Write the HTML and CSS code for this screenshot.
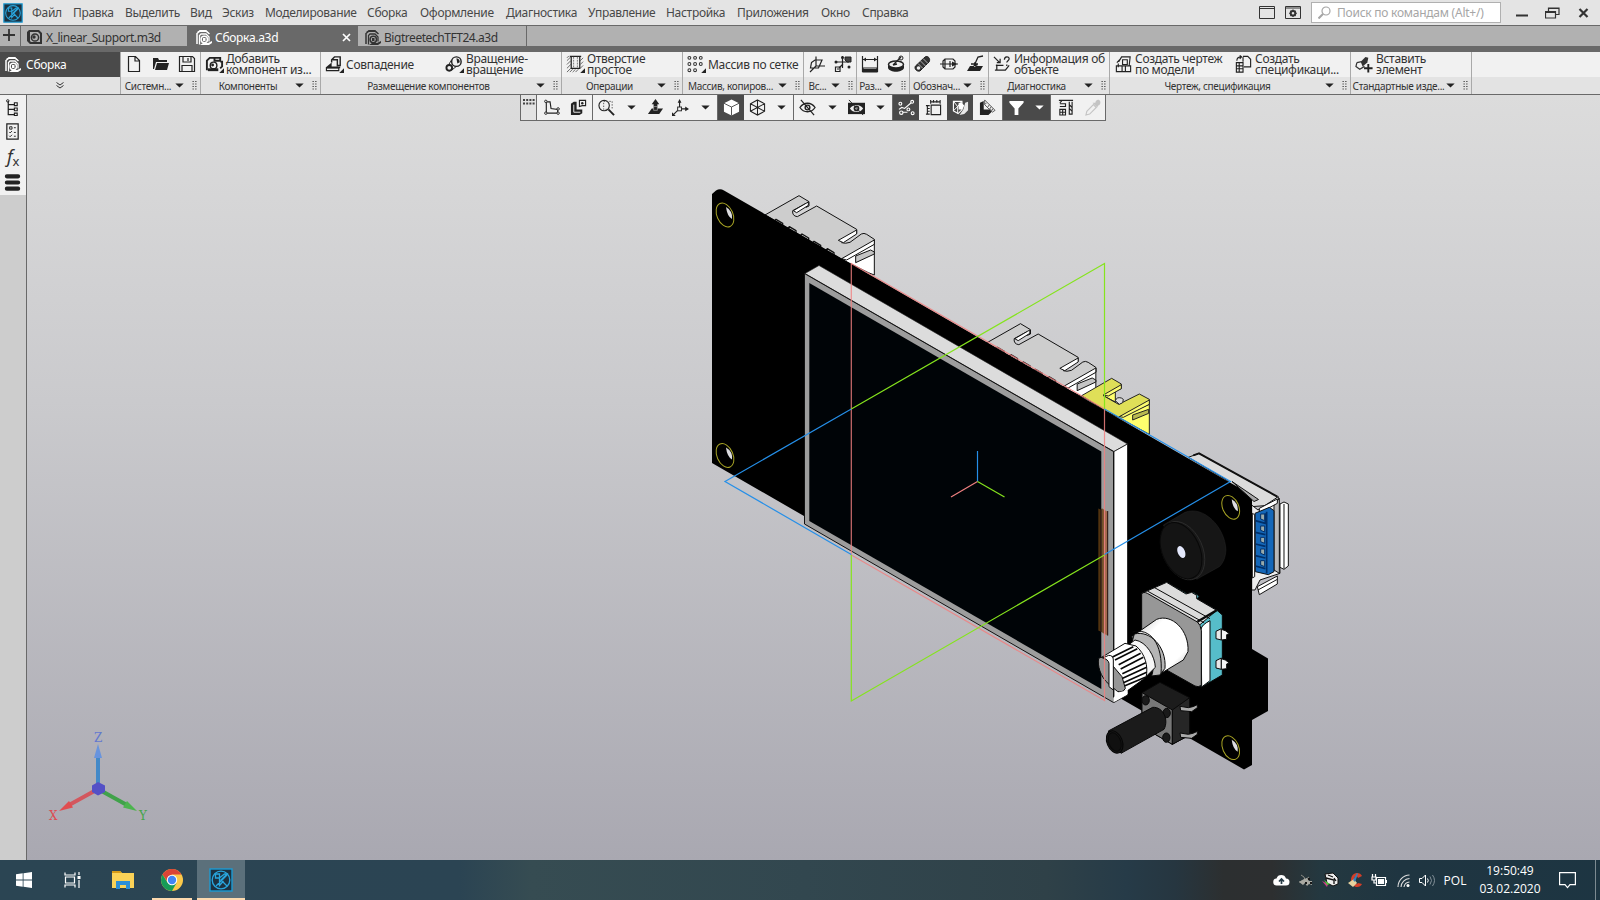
FILE: index.html
```html
<!DOCTYPE html>
<html lang="ru">
<head>
<meta charset="utf-8">
<title>Сборка.a3d</title>
<link rel="stylesheet" href="styles.css">
</head>
<body>
<svg class="defs" width="0" height="0">
  <defs>
    <symbol id="logo" viewBox="0 0 24 24"><rect x="1" y="1" width="22" height="22" fill="#1c3140" stroke="#1b9bd3" stroke-width="1.400"/><g fill="none" stroke="#29a5dd" stroke-width="1.300"><circle cx="12" cy="12" r="8.800"/><path d="M6.500 6h4v4l5-4h2.500l-6 6 6 6M6.500 6v4l4 0M10.500 9.500v8l4-4.500M7 18l11-11"/></g></symbol>
    <symbol id="asm" viewBox="0 0 18 18"><path d="M2 16V5.500L5 3h6l3.500 3" fill="none" stroke="currentColor" stroke-width="1.500"/><path d="M4.500 16.500V7.500L6 6h5l3 3v4.500" fill="none" stroke="currentColor" stroke-width="1.300"/><path d="M5 17l3-2h5l4-2v2l-3 2z" fill="currentColor"/><circle cx="9.300" cy="11.500" r="3.200" fill="none" stroke="currentColor" stroke-width="1.500"/><path d="M8 10h2.500v3H8zM2 4l3-2h6l3 3-3-1H5z" fill="currentColor"/></symbol>
    <symbol id="part" viewBox="0 0 18 18"><path d="M1 4l2-2h10l3 3v11H4l-3-3zm3 0v9l1 1h9V6l-2-2z" fill="currentColor" fill-rule="evenodd"/><circle cx="9" cy="9.500" r="3.600" fill="none" stroke="currentColor" stroke-width="1.500"/><circle cx="8" cy="9" r="1.700" fill="currentColor"/></symbol>
    <symbol id="down" viewBox="0 0 10 6"><path d="M0 .5h10L5 5.500z" fill="currentColor"/></symbol>
    <symbol id="grip" viewBox="0 0 5 9"><path d="M.5.5h1.300M3.200.5h1.300M.5 3h1.300M3.200 3h1.300M.5 5.500h1.300M3.200 5.500h1.300M.5 8h1.300M3.200 8h1.300" stroke="#444" stroke-width="1.200"/></symbol>
  </defs>
</svg>
<div class="app">
  <header class="menu">
    <svg class="logo"><use href="#logo"/></svg>
    <span>Файл</span><span>Правка</span><span>Выделить</span><span>Вид</span><span>Эскиз</span><span>Моделирование</span><span>Сборка</span><span>Оформление</span><span>Диагностика</span><span>Управление</span><span>Настройка</span><span>Приложения</span><span>Окно</span><span>Справка</span>
    <svg width="16" height="13" viewBox="0 0 16 13"><path d="M.5.5h15v12H.5zM.5 2.500h15" fill="none" stroke="#333"/></svg>
    <svg width="16" height="13" viewBox="0 0 16 13"><path d="M.5.5h15v12H.5zM.5 2h15" fill="none" stroke="#333"/><circle cx="8" cy="7.300" r="2.300" fill="none" stroke="#333" stroke-width="2"/><path d="M8 3.500v1.500M8 9.500v1.500M4.300 7.300h1.500M10.200 7.300h1.500M5.500 4.700l1 1M9.500 9l1 1M10.500 4.700l-1 1M6.500 9l-1 1" stroke="#333" stroke-width="1.300"/></svg>
    <div class="search"><svg width="13" height="13" viewBox="0 0 13 13"><circle cx="8" cy="5" r="4" fill="none" stroke="#a5a5a5" stroke-width="1.200"/><path d="M5 8l-4.500 4.500" stroke="#a5a5a5" stroke-width="2"/></svg>Поиск по командам (Alt+/)</div>
    <svg width="13" height="14" viewBox="0 0 13 14"><path d="M0 9.500h12" stroke="#333" stroke-width="2"/></svg>
    <svg width="15" height="12" viewBox="0 0 15 12"><path d="M.5 4.500h10v6.500H.5zM.5 5.500h10M3.500 4V1h10.500v6.500h-3M3.500 1.500H14" fill="none" stroke="#333" stroke-width="1.200"/></svg>
    <svg width="11" height="10" viewBox="0 0 11 10"><path d="M1.500 1l8 8M9.500 1l-8 8" stroke="#333" stroke-width="2.200"/></svg>
  </header>

  <nav class="tabs">
    <div class="plus"><svg width="12" height="12" viewBox="0 0 12 12"><path d="M6 0v12M0 6h12" stroke="#333" stroke-width="1.800"/></svg></div>
    <div class="tab"><svg class="i18"><use href="#part"/></svg><span>X_linear_Support.m3d</span></div>
    <div class="tab active"><svg class="i18"><use href="#asm"/></svg><span>Сборка.a3d</span><svg class="close" width="9" height="9" viewBox="0 0 9 9"><path d="M1 1l7 7M8 1l-7 7" stroke="#fff" stroke-width="1.700"/></svg></div>
    <div class="tab"><svg class="i18"><use href="#asm"/></svg><span>BigtreetechTFT24.a3d</span></div>
    <div class="tabrest"></div>
  </nav>

  <section class="ribbon">
    <div class="mode"><div class="modename"><svg class="i18"><use href="#asm"/></svg>Сборка</div><div class="chev"><svg width="8" height="7" viewBox="0 0 8 7"><path d="M.5.5L4 3l3.500-2.500M.5 3.500L4 6l3.500-2.500" fill="none" stroke="#333"/></svg></div></div>

    <div class="grp sys"><div class="tools">
      <svg viewBox="0 0 18 18"><path d="M2.500 1.500h7l4 4v11h-11zM9 1.500V6h4.500" fill="none" stroke="#222" stroke-width="1.200"/></svg>
      <svg viewBox="0 0 18 18"><path d="M1 3h5l1 2h8v2H4l-2 7H1z M5 8h12l-2 7H3z" fill="#222"/></svg>
      <svg viewBox="0 0 18 18"><path d="M1.500 1.500h13l2 2v13h-15zM5 1.500V7h8V1.500M4 16.500v-6h10v6M10 3v3" fill="none" stroke="#222" stroke-width="1.200"/></svg>
    </div><div class="cap"><b>Системн...</b><svg class="dn"><use href="#down"/></svg><svg class="gr"><use href="#grip"/></svg></div></div>

    <div class="grp"><div class="tools">
      <div class="cmd"><svg viewBox="0 0 20 20"><path d="M2 16V6l3-3h4M10 3h6v3h-6zM16 7h2v5l-2 2" fill="none" stroke="#222" stroke-width="2"/><path d="M3 17h11v-3H3z" fill="#222"/><circle cx="9" cy="11" r="3.500" fill="none" stroke="#222" stroke-width="1.500"/><circle cx="8" cy="10.500" r="1.500" fill="#222"/><path d="M20 14v5h-5z" fill="#222"/></svg><span>Добавить<br>компонент из...</span></div>
    </div><div class="cap"><b>Компоненты</b><svg class="dn"><use href="#down"/></svg><svg class="gr"><use href="#grip"/></svg></div></div>

    <div class="grp"><div class="tools">
      <div class="cmd w120"><svg viewBox="0 0 20 20"><path d="M7 8V5l3-3h6v9h-3M8 5h5v7" fill="none" stroke="#222" stroke-width="1.500"/><path d="M1 13l6-5v4h9v2H1z" fill="#222"/><path d="M1.500 13.500h13v3h-13z" fill="none" stroke="#222" stroke-width="1.200"/><path d="M20 14v5h-5z" fill="#222"/></svg><span>Совпадение</span></div>
      <div class="cmd"><svg viewBox="0 0 20 20"><circle cx="12" cy="7" r="5" fill="none" stroke="#222" stroke-width="1.500"/><path d="M12 3.500c2.500.5 3.500 2 3.500 4L13 9z" fill="#222"/><circle cx="4.500" cy="13.500" r="3" fill="none" stroke="#222" stroke-width="2"/><path d="M4 10l3-5M7 16l5-4" stroke="#222"/><path d="M20 14v5h-5z" fill="#222"/></svg><span>Вращение-<br>вращение</span></div>
    </div><div class="cap"><b>Размещение компонентов</b><svg class="dn"><use href="#down"/></svg><svg class="gr"><use href="#grip"/></svg></div></div>

    <div class="grp"><div class="tools">
      <div class="cmd"><svg viewBox="0 0 20 20"><path d="M1 6l4-4M1 10l4-4M1 14l4-4M1 18l4-4M4 18l3-3M7 18l3-3M10 18l3-3M15 6l3-3M15 10l3-3M15 14l3-3M1 3l2-2" stroke="#555" stroke-width=".9"/><path d="M5.500 1.500h9V14h-9zM4 1.500h12" fill="#f1f1f1" stroke="#222" stroke-width="1.300"/><path d="M8 2v11M12 2v11" stroke="#777" stroke-dasharray="2 1"/><path d="M20 14v5h-5z" fill="#222"/></svg><span>Отверстие<br>простое</span></div>
    </div><div class="cap"><b>Операции</b><svg class="dn"><use href="#down"/></svg><svg class="gr"><use href="#grip"/></svg></div></div>

    <div class="grp"><div class="tools">
      <div class="cmd"><svg viewBox="0 0 20 20"><g fill="none" stroke="#333" stroke-width="1.100"><circle cx="2.500" cy="3" r="1.500"/><circle cx="8.500" cy="3" r="1.500"/><circle cx="14.500" cy="3" r="1.500"/><circle cx="2.500" cy="9.500" r="1.500"/><circle cx="8.500" cy="9.500" r="1.500"/><circle cx="14.500" cy="9.500" r="1.500"/><circle cx="2.500" cy="16" r="1.500"/><circle cx="8.500" cy="16" r="1.500"/></g><path d="M20 14v5h-5z" fill="#222"/></svg><span>Массив по сетке</span></div>
    </div><div class="cap"><b>Массив, копиров...</b><svg class="dn"><use href="#down"/></svg><svg class="gr"><use href="#grip"/></svg></div></div>

    <div class="grp duo"><div class="tools">
      <svg viewBox="0 0 18 18"><path d="M8 1.500V11l-6 6M8 11h9M3.500 7.500L7 5h7l-3.500 8H2.500z" fill="none" stroke="#222" stroke-width="1.200"/></svg>
      <svg viewBox="0 0 18 18"><path d="M8.500 1v12M2 7h13M5 13l4-4" stroke="#222" stroke-width="1.200"/><path d="M11 2h6v5h-4l-2-2z" fill="#444" stroke="#222"/><path d="M1.500 12h4.500v4.500H1.500zM3 14h2" fill="none" stroke="#222" stroke-width="1.200"/><circle cx="8.500" cy="2.500" r="1.500" fill="#222"/><circle cx="2" cy="7" r="1.500" fill="#222"/><circle cx="15" cy="12" r="1.500" fill="#222"/></svg>
    </div><div class="cap"><b>Вс...</b><svg class="dn"><use href="#down"/></svg><svg class="gr"><use href="#grip"/></svg></div></div>

    <div class="grp duo"><div class="tools">
      <svg viewBox="0 0 18 18"><path d="M1.500 1v16M16.500 1v16M2 4.500h14M2 13h14v4H2z" stroke="#222" fill="none" stroke-width="1.200"/><path d="M2 14h14v3H2zM2 4.500l3-2v4zM16 4.500l-3-2v4z" fill="#222"/></svg>
      <svg viewBox="0 0 18 18"><ellipse cx="9" cy="9.500" rx="7.500" ry="3.500" fill="none" stroke="#222" stroke-width="1.500"/><path d="M1 10v3c2 5 14 5 16 0v-3c-2 4-14 4-16 0z" fill="#222"/><path d="M6 10l8-8M6 10l4-1" stroke="#222" stroke-width="1.300"/><circle cx="14" cy="3" r="2" fill="none" stroke="#222"/></svg>
    </div><div class="cap"><b>Раз...</b><svg class="dn"><use href="#down"/></svg><svg class="gr"><use href="#grip"/></svg></div></div>

    <div class="grp duo"><div class="tools">
      <svg viewBox="0 0 18 18"><path d="M1.500 11L11 2c3-2 6 2 4 5l-9 9c-4 1-6-3-4.500-5z" fill="#333" stroke="#222"/><path d="M4 8.500l5 5M6.500 6l5 5M9 3.500l5 5" stroke="#ccc" stroke-width=".8"/><circle cx="4.500" cy="13" r="1.800" fill="#eee"/></svg>
      <svg viewBox="0 0 18 18"><path d="M5 4h8l2 2v6l-2 2H5l-2-2V6zM0 9h18M5 4v10M10 6v6" fill="none" stroke="#222" stroke-width="1.200"/><path d="M12 6.500L17 9l-5 2.500z" fill="#222"/></svg>
      <svg viewBox="0 0 18 18"><path d="M17 1l-5 1-4 9M5 9h7" fill="none" stroke="#222" stroke-width="1.300"/><path d="M4 11h13l-3 5H1zM8 7l0 5 4-2z" fill="#222"/></svg>
    </div><div class="cap"><b>Обознач...</b><svg class="dn"><use href="#down"/></svg><svg class="gr"><use href="#grip"/></svg></div></div>

    <div class="grp"><div class="tools">
      <div class="cmd"><svg viewBox="0 0 20 20"><path d="M1 2l6 6M4 8h3.500V4M4 10v6h9l4-5M2 16h2M3 11l8 0M12 5c0-4 5-4 5-1 0 2-2.500 2-2.500 4M14.500 10v1.500" fill="none" stroke="#222" stroke-width="1.300"/></svg><span>Информация об<br>объекте</span></div>
    </div><div class="cap"><b>Диагностика</b><svg class="dn"><use href="#down"/></svg><svg class="gr"><use href="#grip"/></svg></div></div>

    <div class="grp"><div class="tools">
      <div class="cmd w120"><svg viewBox="0 0 20 20"><path d="M2.500 17.500h15v-6h-15zM4.500 9v4M8.500 11v6M12 11v6M5 7l3-5h9l-1 9M9 5h5v5H9zM3 8l3-3" fill="none" stroke="#222" stroke-width="1.200"/></svg><span>Создать чертеж<br>по модели</span></div>
      <div class="cmd"><svg viewBox="0 0 20 20"><path d="M9.500 1.500h5l3 3v8h-7M2.500 8h7v10h-7zM2.500 11.500h7M2.500 14.500h7M5.500 8v10M3 6c0-3 2-4 5-4M6 .5L8 2 6 4M9.500 2v5" fill="none" stroke="#222" stroke-width="1.200"/></svg><span>Создать<br>спецификаци...</span></div>
    </div><div class="cap"><b>Чертеж, спецификация</b><svg class="dn"><use href="#down"/></svg><svg class="gr"><use href="#grip"/></svg></div></div>

    <div class="grp"><div class="tools">
      <div class="cmd"><svg viewBox="0 0 20 20"><path d="M6 7l5-5 3 1-1 5-5 4z" fill="#333"/><path d="M2 8l5-1M2 8l-1 4 4 3 5-3" fill="none" stroke="#333" stroke-width="1.300"/><path d="M14 9.500v9M9.500 14h9" fill="none" stroke="#222" stroke-width="2"/></svg><span>Вставить<br>элемент</span></div>
    </div><div class="cap"><b>Стандартные изде...</b><svg class="dn"><use href="#down"/></svg><svg class="gr"><use href="#grip"/></svg></div></div>
    <div class="grp rest"><div class="tools"></div><div class="cap"></div></div>
  </section>

  <main class="work">
    <aside class="side"><div class="sidebox">
      <svg viewBox="0 0 18 18"><path d="M4.500 2v14.500h7M4.500 6h7M4.500 11h7" fill="none" stroke="#222" stroke-width="1.300"/><circle cx="4" cy="2" r="1.300" fill="none" stroke="#222"/><path d="M11 4h3v3h-3zM11 9.500h3v3h-3zM11 15h3v2.500h-3z" fill="none" stroke="#222" stroke-width="1.200"/></svg>
      <svg viewBox="0 0 18 18"><path d="M3 1h12v16H3z" fill="none" stroke="#222" stroke-width="1.300"/><path d="M6 4h2.500v2.500H6zM10.500 5h2M5.500 9.500l1 1 2-2M10.500 10h2M5.500 13.500l1 1 2-2M10.500 14h2" fill="none" stroke="#222"/></svg>
      <div class="fx">f<sub>x</sub></div>
      <svg viewBox="0 0 18 18"><path d="M3 2.500h12M3 9h12M3 15.500h12" stroke="#222" stroke-width="4.300" stroke-linecap="round"/></svg>
    </div></aside>

    <div class="view">
      <div class="vbar">
        <div class="grip"><svg width="12" height="6" viewBox="0 0 12 6"><path d="M0 1h12M0 4.500h12" stroke="#444" stroke-width="2" stroke-dasharray="2 1.200"/></svg></div>
        <div><svg viewBox="0 0 18 18"><path d="M3.500 3v12h12v-4l-7-1-1-7z" fill="none" stroke="#222" stroke-width="1.200"/><g fill="#f1f1f1" stroke="#222"><circle cx="3" cy="2.500" r="1.300"/><circle cx="3" cy="15" r="1.300"/><circle cx="16" cy="15" r="1.300"/><circle cx="16" cy="10.500" r="1.300"/></g></svg></div>
        <div class="end"><svg viewBox="0 0 18 18"><path d="M1 5l3-2h3v8h6v4l-3 2H1z" fill="#222"/><path d="M4 6v8h7" stroke="#eee" fill="none"/><path d="M10 1.500h6.500v5.500H13l-3 1z" fill="none" stroke="#222" stroke-width="1.200"/><circle cx="13" cy="4.500" r="1.300" fill="#222"/></svg></div>
        <div><svg viewBox="0 0 18 18"><circle cx="6.500" cy="7" r="5.500" fill="none" stroke="#222" stroke-width="1.200"/><path d="M11 11l6 6" stroke="#222" stroke-width="2"/><path d="M6 2.500h9v9M6 4v7h8" fill="none" stroke="#555" stroke-dasharray="1.500 1.500"/></svg></div>
        <div><svg class="dn"><use href="#down"/></svg></div>
        <div><svg viewBox="0 0 18 18"><path d="M9 0l4 5.500H11V12H7V5.500H5z" fill="#222"/><path d="M5 10h12l-4 6H1z" fill="#222"/><path d="M7 8h4v4H7z" fill="#222" stroke="#f1f1f1" stroke-width=".5"/></svg></div>
        <div><svg viewBox="0 0 18 18"><path d="M8 2v8M10 10.500h6M6 12l-5 5" stroke="#222" stroke-width="1.200"/><path d="M6 4l2-4 2 4zM14 8l4 2.500-4 2.500zM0 14l0 4 4 0z" fill="#222"/><rect x="6" y="8.500" width="4" height="4" fill="#f1f1f1" stroke="#222"/></svg></div>
        <div class="end2"><svg class="dn"><use href="#down"/></svg></div>
        <div class="on"><svg viewBox="0 0 18 18"><path d="M9 .5l8 4v9l-8 4-8-4v-9z" fill="#fff"/><path d="M1 4.500l8 4 8-4M9 8.500v9" fill="none" stroke="#4a4a4a"/></svg></div>
        <div><svg viewBox="0 0 18 18"><path d="M9 1l7.500 4v8L9 17l-7.500-4V5zM1.500 5L9 9l7.500-4M9 9v8M9 1v8l-7.500 4M9 9l7.500 4" fill="none" stroke="#222" stroke-width="1.100"/></svg></div>
        <div class="end"><svg class="dn"><use href="#down"/></svg></div>
        <div><svg viewBox="0 0 18 18"><path d="M1 9c4-6 12-6 16 0-4 6-12 6-16 0z" fill="none" stroke="#222" stroke-width="1.400"/><circle cx="9" cy="9" r="2.500" fill="none" stroke="#222" stroke-width="1.500"/><path d="M2 1l14 16" stroke="#222" stroke-width="1.300"/></svg></div>
        <div><svg class="dn"><use href="#down"/></svg></div>
        <div><svg viewBox="0 0 18 18"><path d="M0 4h18v12H0z" fill="#222"/><path d="M2 10c3-5 11-5 14 0-3 5-11 5-14 0z" fill="#eee"/><circle cx="9" cy="10" r="3" fill="#222"/><circle cx="9" cy="10" r="1.200" fill="#eee"/><path d="M1 1l15 16" stroke="#222"/></svg></div>
        <div class="end2"><svg class="dn"><use href="#down"/></svg></div>
        <div class="on"><svg viewBox="0 0 18 18"><g fill="none" stroke="#fff" stroke-width="1.200"><path d="M1 11L4 9l3 1 7-6M5 14h5"/><circle cx="2.500" cy="5" r="1.500"/><circle cx="15" cy="3" r="1.500"/><circle cx="3.500" cy="14.500" r="1.800"/><circle cx="11" cy="11" r="1.500"/><circle cx="15.500" cy="15" r="1.500"/></g></svg></div>
        <div><svg viewBox="0 0 18 18"><path d="M6.500 6.500h10v10h-10zM6 1v4M16 1v4M6 3h10M1 7h4M1 16h4M2.500 7v9M9 1v3M12.500 1v3M2 10h3M2 13h3" fill="none" stroke="#222" stroke-width="1.200"/></svg></div>
        <div class="on"><svg viewBox="0 0 18 18"><path d="M1.500 2.500h9v9l-4 4-5-3z" fill="none" stroke="#fff" stroke-width="1.200"/><path d="M2 3l4 5 4-5M6 8v7M2 12l8-8" fill="none" stroke="#fff"/><path d="M7 4h3l3 3-2 4H7z" fill="#fff"/><path d="M14 4l3-1v9l-4 4-5 1 4-6z" fill="#e8e8e8"/></svg></div>
        <div class="end2"><svg viewBox="0 0 18 18"><path d="M1 4l4-2v9h8v3l-3 3H1z" fill="#222"/><path d="M6 1l11 11-3 2L6 6zM8 4l-2 2M11 6l-2 3M13 8l-2 3M15 10l-2 3" fill="none" stroke="#555"/></svg></div>
        <div class="on"><svg viewBox="0 0 18 18"><path d="M1.500 2h15v2L11 10v7H7v-7L1.500 4z" fill="#fff"/></svg></div>
        <div class="on end2"><svg class="dn"><use href="#down"/></svg></div>
        <div><svg viewBox="0 0 18 18"><path d="M2 1.500h15M3 5h6v3H3M3 11v6h6v-6zM3 14h6M6 11v6M13 3v13h3V3M13 6l3 3M13 10l3 3M3 4l2-2" fill="none" stroke="#222" stroke-width="1.200"/></svg></div>
        <div><svg viewBox="0 0 18 18"><path d="M2 17l1-4 7-7 3 3-7 7z" fill="none" stroke="#c4c4c4" stroke-width="1.200"/><path d="M9 4l5 5 1-2c3-1 3-5 1-6s-4 1-4 3z" fill="#c4c4c4"/></svg></div>
      </div>

      <svg class="scene" viewBox="27 95 1573 765" width="1573" height="765">
        <defs>
          <linearGradient id="cyl" x1="0" y1="0" x2="1" y2="1"><stop offset="0" stop-color="#bbb"/><stop offset=".3" stop-color="#fff"/><stop offset=".75" stop-color="#fff"/><stop offset="1" stop-color="#aaa"/></linearGradient>
          <g id="conn" stroke="#111" stroke-width="3" stroke-linejoin="round">
            <path d="M425 238L523 180V285L505 278Z" fill="#fff"/>
            <path d="M467 228L512 210L523 216V222L467 248Z" fill="#c4c4c4"/>
            <path d="M195 105L297 47L327 65V78L318 82L318 70L278 92Q276 108 292 110L350 78L470 148V160L425 188Q436 192 450 187L484 162Q492 158 500 163L523 178V192L425 238Z" fill="#cdcdcd"/>
            <path d="M415 181L470 150V162L430 188ZM280 92L318 70L325 66V76L290 98Z" fill="#fff"/>
            <path d="M425 236L523 180V193L440 240Z" fill="#fff"/>
            <path d="M220 125l8-7 20 12v8M260 147l8-7 20 12v8M298 169l8-7 20 12v8M334 191l8-7 20 12v8M374 213l8-7 20 12v8" fill="none" stroke-width="4"/>
          </g>
          <g id="hole"><ellipse rx="8" ry="12.500" transform="rotate(-24)" fill="#000" stroke="#a9a524"/><path d="M1 -8Q8 -4 7 4Q2 1 1 -8Z" fill="#dcdce0"/></g>
        </defs>
        <use href="#conn" transform="translate(700 180) scale(.33333)"/>
        <use href="#conn" transform="translate(921.500 308) scale(.33333)"/>
        <g transform="translate(960 300) scale(.33333)" stroke="#222" stroke-width="3" stroke-linejoin="round">
          <path d="M475 352L568 312V403Z" fill="#ffff6e"/>
          <path d="M430 287L466 270V306Z" fill="#ffff6e"/>
          <path d="M365 287L455 235L484 252V266L430 287L476 313L538 282L568 298V313L475 352L440 335Z" fill="#dfdf58"/>
          <path d="M430 285L484 254V266L445 288ZM478 350L568 300V313L490 352Z" fill="#fbfb70"/>
          <path d="M518 345L566 328V340L518 360Z" fill="#b9b950"/><path d="M466 302q4-12 18-8l6 4-2 10-10 5z" fill="#ddd"/>
        </g>
        <g transform="translate(1060 430) scale(.33333)" stroke="#111" stroke-width="3" stroke-linejoin="round">
          <path d="M385 82L417 70L652 200L640 225L575 230L500 150Z" fill="#dcdcdc"/>
          <path d="M400 76L417 70L652 200" fill="none" stroke-width="6"/>
          <path d="M575 225L594 240L655 200L660 430L600 450L585 480H575Z" fill="#eee"/>
          <path d="M660 222L672 216L685 222V408L672 418L660 412Z" fill="#fff"/><path d="M672 222V416" fill="none"/>
          <path d="M642 225L658 205V430L642 420Z" fill="#b8b8b8"/>
          <path d="M598 235L652 207V220L598 249Z" fill="#fff"/>
          <path d="M592 470L652 438V462L598 494Z" fill="#fff"/><path d="M594 480L652 448" fill="none"/>
          <path d="M585 250L628 232L642 242V425L625 434L586 425Z" fill="#1467b8"/>
          <path d="M586 272L616 280V250M586 307L616 314M586 342L616 349M586 377L616 384M586 408L616 416M620 245V430" fill="none" stroke="#002f69" stroke-width="5"/>
          <path d="M602 252h12v20l-12-5zM602 288h12v18l-12-5zM602 322h12v18l-12-5zM602 357h12v18l-12-5zM602 392h12v18l-12-5z" fill="#9aa" stroke="#002f69"/>
          <path d="M577 250L584 254V440L577 444Z" fill="#fff"/>
        </g>
        <path d="M712 194L716 190.500Q720 188 724 190.500L1229 482L1252 495V649L1268 658.500V711L1252 720V765L1244 769.500L712 463Z" fill="#000"/>
        <path d="M1232 481.500L1258.500 499.500L1254 501.500Z" fill="#aaa" stroke="#111"/>
        <use href="#hole" x="725" y="215"/><use href="#hole" x="725" y="455.500"/><use href="#hole" x="1230.700" y="507.300"/><use href="#hole" x="1230.700" y="747.700"/>
        <!-- display module -->
        <path d="M805 273.500L819 265.500L1127.500 444L1114 451.500Z" fill="#dcdcdc" stroke="#222" stroke-width=".6"/>
        <path d="M1114 451.500L1127.500 444V695L1114 702.500Z" fill="#fff" stroke="#111" stroke-width=".8"/>
        <path d="M804.500 273.500L1113.500 451.500V702.500L804.500 524Z" fill="#9d9d9d" stroke="#111"/>
        <path d="M809.300 283L1101.300 451.500V689L809.300 521Z" fill="#000407"/>
        <path d="M1098.300 508.500L1101.500 510V632L1098.300 630.500Z" fill="#51330f"/><path d="M1101.500 508L1104.500 510V634L1101.500 632Z" fill="#74512b"/><path d="M1104.500 510L1108 512V635.500L1104.500 634Z" fill="#a2694c"/><path d="M1101 509V632M1107.700 511V635.500" stroke="#211" fill="none"/>

        <g transform="translate(1060 430) scale(.33333)" stroke="#080808" stroke-width="3" stroke-linejoin="round">
          <!-- buzzer -->
          <path d="M310 285L375 247C430 225 495 290 498 360C496 385 490 398 478 410L410 448Z" fill="#161616" stroke="#333" stroke-width="1"/>
          <ellipse cx="368" cy="362" rx="60" ry="92" transform="rotate(-24 368 362)" fill="#181818" stroke="#333" stroke-width="2"/>
          <ellipse cx="363" cy="362" rx="56" ry="89" transform="rotate(-24 363 362)" fill="#141414"/>
          <ellipse cx="364" cy="366" rx="11" ry="19" transform="rotate(-22 364 366)" fill="#e4e8fc" stroke="none"/>
          <!-- rotary encoder -->
          <path d="M245 490L320 457L380 490L400 487L418 498L412 506L470 540L487 555V735L425 771L380 750Z" fill="#56bdca"/>
          <path d="M245 490L320 457L378 492L395 487L410 496V506L470 541L448 560L420 584Z" fill="#dcdcdc"/>
          <path d="M262 483L432 578M282 472L450 566" fill="none"/>
          <path d="M412 575L470 541" fill="none" stroke-width="7"/>
          <path d="M423 598Q425 584 450 572V752L425 771Z" fill="#fff"/>
          <path d="M245 492Q250 484 262 490L412 576Q422 584 424 602V766Q415 773 405 768L245 678Z" fill="#979797"/>
          <path d="M468 604L484 596V630L468 626ZM468 692L484 684V718L468 714Z" fill="#e8e8e8"/><path d="M484 598L496 602L508 611L500 614V628L484 630ZM484 686L496 690L508 699L500 702V716L484 718Z" fill="#f4f4f4"/>
          <path d="M215 620L290 568C335 550 388 600 384 665L370 690L290 738Z" fill="url(#cyl)"/>
          <path d="M215 640L223 612C270 600 320 650 315 715L300 735L275 738C290 690 270 640 215 640Z" fill="#b5b5b5"/>
          <path d="M217 606C270 592 310 640 303 732" fill="none"/>
          <path d="M205 645L225 630C260 635 285 680 286 712L260 738Z" fill="#f7f7f7"/>
          <path d="M125 682L195 640L228 648C255 670 266 710 258 742L200 784L175 785Z" fill="#fff"/>
          <path d="M150 685L220 650M165 690L232 656M176 704L242 670M182 717L250 682M187 731L257 698M188 745L260 712M187 760L260 727M184 772L258 741" fill="none" stroke-width="5"/>
          <path d="M116 685Q130 677 142 688L186 740L196 775Q188 790 172 784L146 762C120 740 112 705 116 685Z" fill="#969696"/>
          <path d="M128 684L146 676Q160 676 160 690V780L147 770V700Q145 688 128 684Z" fill="#fff"/>
          <path d="M178 787L203 780V792L160 817V803Z" fill="#fff" stroke="none"/>
          <!-- push button -->
          <path d="M246 788L300 757L389 803V915L337 943L246 890Z" fill="#1c1c1c"/>
          <path d="M246 788L337 840V943L246 890Z" fill="#777"/>
          <path d="M337 840L389 803V915L337 943Z" fill="#262626"/>
          <g fill="#1a1a1a"><ellipse cx="257" cy="811" rx="11" ry="14"/><ellipse cx="320" cy="849" rx="11" ry="14"/><ellipse cx="319" cy="923" rx="11" ry="14"/></g>
          <path d="M360 829L385 833Q400 831 412 824V833L395 845L362 842ZM360 909L385 913Q400 911 412 904V913L395 925L362 922Z" fill="#aaa"/>
          <path d="M145 903L278 832C310 830 327 870 312 898L183 970Z" fill="#1b1b1b"/>
          <ellipse cx="164" cy="936" rx="23" ry="35" transform="rotate(-22 164 936)" fill="#171717" stroke="#050505"/><ellipse cx="164" cy="936" rx="18" ry="29" transform="rotate(-22 164 936)" fill="#101010"/>
        </g>
        <!-- datum planes -->
        <g fill="none" stroke-width="1.200">
          <path d="M1104.500 409V700.500L851.300 555V263.500L1104.500 409" stroke="#f08080" stroke-opacity=".85"/>
          <path d="M851.300 409L1104.500 263.500V409M851.300 555V701L1104.500 555" stroke="#85e41d"/>
          <path d="M851.300 409L725 481.500L851.300 554.500M1104.500 409L1230.500 481.500L1104.500 554.500" stroke="#258fe8"/>
          <path d="M977.500 481.500V451" stroke="#258fe8"/><path d="M977.500 481.500L951 497" stroke="#f08080"/><path d="M977.500 481.500L1004.500 497" stroke="#85e41d"/>
        </g>
        <!-- orientation triad -->
        <path d="M98 788V757" stroke="#4389c8" stroke-width="4"/><path d="M98 744L102 758H94Z" fill="#6894de"/>
        <path d="M98 789L70 804.500" stroke="#d3575e" stroke-width="4"/><path d="M59 811L69 801L73 807.500Z" fill="#e04d50"/>
        <path d="M98 789L126 804.500" stroke="#40a24a" stroke-width="4"/><path d="M137 811L123 807.500L127 801Z" fill="#4cb44e"/>
        <path d="M92 785.500L98 782L105 785.500V792L98 795.500L92 792Z" fill="#5450c6"/>
        <g class="axis"><text x="94" y="741.500" fill="#6378cf">Z</text><text x="49" y="819.500" fill="#dc4b52">X</text><text x="139" y="819.500" fill="#45a54a">Y</text></g>
      </svg>
    </div>
  </main>

  <footer class="task">
    <div><svg width="16" height="16" viewBox="0 0 16 16"><path d="M0 2.300L6.700 1.300V7.600H0ZM7.500 1.200L16 0V7.600H7.500ZM0 8.400H6.700V14.700L0 13.700ZM7.500 8.400H16V16L7.500 14.800Z" fill="#fff"/></svg></div>
    <div><svg width="17" height="16" viewBox="0 0 17 16"><path d="M1 .5V3h10V.5M1.500 5h9v6h-9zM1 15.500V13h10v2.500M15 0v3M15 8v8" fill="none" stroke="#fff" stroke-width="1.200"/><path d="M13.500 4h3v3h-3z" fill="#fff"/></svg></div>
    <div><svg width="22" height="18" viewBox="0 0 22 18"><path d="M0 0h8l2 2h12v15H0z" fill="#fbd257"/><path d="M0 0h8l2 2H0z" fill="#d79b17"/><path d="M4 18v-8h14v8h-4v-4H8v4z" fill="#2d8fd6"/></svg></div>
    <div class="run"><svg width="22" height="22" viewBox="0 0 22 22"><circle cx="11" cy="11" r="11" fill="#fbc94a"/><path d="M1.500 5.500A11 11 0 0 1 20.500 5.500H11L7 13.500z" fill="#db4437"/><path d="M1.500 5.500A11 11 0 0 0 11 22L15.500 14 6.500 13.500z" fill="#169c58"/><circle cx="11" cy="11" r="5.200" fill="#fff"/><circle cx="11" cy="11" r="4.200" fill="#4285f4"/></svg></div>
    <div class="cur"><svg width="24" height="24"><use href="#logo"/></svg></div>
    <div></div>
    <div><svg width="17" height="12" viewBox="0 0 17 12"><path d="M4 11.500a3.500 3.500 0 0 1-.5-7 5 5 0 0 1 9.500 0 3.500 3.500 0 0 1 0 7z" fill="#fff"/><path d="M8.500 10V5.500M6 7.500l2.500-2.500L11 7.500" fill="none" stroke="#263b46" stroke-width="1.700"/></svg></div>
    <div><svg width="16" height="14" viewBox="0 0 16 14"><path d="M3 2l3 2 1 3M1 9l6-2 4-3" stroke="#8a8a83" fill="none" stroke-width="1"/><path d="M1 9l5-3 3-1 2 3 3 0v4l-3-1-2 2-2-3-2 2z" fill="#a9a9a2"/><path d="M10 5h2v2h-2zM12 9h2v2h-2zM7 9h2v2H7z" fill="#171717"/></svg></div>
    <div><svg width="17" height="16" viewBox="0 0 17 16"><path d="M3 2l8-1 3 3 2 2v6l-5 2-6-3z" fill="#ededed" stroke="#111"/><path d="M4 6l8 2v4M12 6l2 3M6 3l5 2" stroke="#111" fill="none" stroke-width="1.300"/><path d="M0 9l6 3-1 3z" fill="#cc3d88"/><path d="M2 8l6 4-3 1z" fill="#53c53e"/></svg></div>
    <div><svg width="16" height="16" viewBox="0 0 16 16"><path d="M15 4C13-1 4 0 4 8c0 8 9 9 11 4l-4-1c-1 2-4 1-4-3s3-5 4-2z" fill="#d33e28"/><path d="M1 11l6-4 3 4-4 4z" fill="#e6d29f"/><path d="M6 8L10 1l1 1-3 8z" fill="#397eb8"/></svg></div>
    <div><svg width="16" height="13" viewBox="0 0 16 13"><path d="M5.500 3.500h9v8h-9zM15.500 6v3M1.500 0v3M4.500 0v3M1 3h4v3H1zM3 6v3h2" fill="none" stroke="#fff" stroke-width="1.200"/><path d="M7 5h6v5H7z" fill="#fff"/></svg></div>
    <div><svg width="13" height="13" viewBox="0 0 13 13"><path d="M1 13A12 12 0 0 1 12.500 1M4 13A9 9 0 0 1 12.500 4.500M7 13A6 6 0 0 1 12.500 8" fill="none" stroke="#ddd" stroke-width="1.100"/><circle cx="11" cy="11.500" r="1.500" fill="#fff"/></svg></div>
    <div><svg width="17" height="13" viewBox="0 0 17 13"><path d="M.5 4.500h2.500l3.500-3.500v11L3 8.500H.5z" fill="none" stroke="#fff"/><path d="M8.500 4.500q1.500 2 0 4" fill="none" stroke="#fff"/><path d="M11 2.500q3 4 0 8M13.500 1q4 5.500 0 11" fill="none" stroke="#839098"/></svg></div>
    <div class="lang">POL</div>
    <div class="clock">19:50:49<br>03.02.2020</div>
    <div class="note"><svg width="17" height="17" viewBox="0 0 17 17"><path d="M.6.6h15.800v12h-5.400l-2.500 3-2.500-3H.6z" fill="none" stroke="#fff" stroke-width="1.200"/></svg></div>
    <div class="peek"></div>
  </footer>
</div>
</body>
</html>
```

FILE: styles.css
```css
* { box-sizing: border-box; }
body { margin: 0; font: 12px/15px "Noto Sans", "Open Sans", sans-serif; letter-spacing: -.3px; color: #333; overflow: hidden; }
svg { display: block; flex: none; }
.defs { position: absolute; }
.app { width: 1600px; height: 900px; display: grid; grid-template-rows: 25px 27px 43px 765px 40px; }

.menu { display: grid; grid-template-columns: 32px 41px 52px 65px 32px 43px 102px 53px 86px 82px 78px 71px 84px 41px 397px 26px 26px 205px 29px 33px 32px; align-items: center; background: #e4e4e4; white-space: nowrap; color: #484848; }
.menu .logo { width: 20px; height: 20px; margin-left: 3px; }
.menu > svg { align-self: center; }
.search { width: 190px; height: 21px; border: 1px solid #b0b0b0; background: #fff; color: #a6a6a6; display: flex; align-items: center; gap: 6px; padding-left: 6px; letter-spacing: -.25px; }

.tabs { display: grid; grid-template-columns: 21px 167px 170px 169px 1fr; background: #b1b1b1; border-top: 1px solid #696969; border-bottom: 6px solid #696969; letter-spacing: -.45px; }
.plus { padding: 3px 0 0 3px; }
.plus, .tab { border-right: 1px solid #696969; }
.tab { display: flex; align-items: center; padding-left: 5px; gap: 2px; padding-top: 2px; }
.tab.active { background: #696969; color: #fff; padding-left: 7px; letter-spacing: -.3px; }
.tab:nth-child(4) { padding-left: 6px; }
.close { margin-left: auto; margin-right: 6px; }
.i18 { width: 18px; height: 18px; }

.ribbon { display: grid; grid-template-columns: 120px 80px 120px 241px 121px 121px 53px 53px 79px 121px 241px 121px 1fr; border-bottom: 1px solid #696969; }
.modename { height: 25px; background: #4a4a4a; color: #fff; display: flex; align-items: center; gap: 4px; padding-left: 4px; padding-bottom: 1px; }
.chev { height: 17px; background: #e3e3e3; display: flex; justify-content: center; padding-top: 5px; }
.grp { border-left: 1px solid #a9a9a9; min-width: 0; }
.tools { height: 25px; background: #f1f1f1; display: flex; align-items: center; padding-left: 4px; padding-bottom: 1px; }
.tools > svg { width: 18px; height: 18px; }
.sys .tools { gap: 8px; padding-left: 5px; }
.duo .tools { gap: 8px; }
.cmd { display: flex; align-items: center; gap: 2px; line-height: 11px; white-space: nowrap; }
.cmd svg { width: 19px; height: 19px; }
.w120 { width: 120px; }
.cap { height: 17px; background: #e3e3e3; display: flex; align-items: center; font-size: 10px; line-height: 15px; padding-right: 3px; }
.cap b { font-weight: 400; flex: 1; text-align: center; white-space: nowrap; padding-top: 1px; }
.dn { width: 9px; height: 5px; color: #222; }
.cap .gr { width: 5px; height: 9px; margin-left: 8px; }

.work { display: grid; grid-template-columns: 27px 1573px; }
.side { background: #cdcdcd; border-right: 1px solid #696969; }
.sidebox { height: 100px; background: #f1f1f1; display: flex; flex-direction: column; align-items: center; justify-content: space-around; }
.sidebox svg { width: 17px; height: 17px; margin-right: 1px; }
.fx { font-style: italic; font-size: 18px; line-height: 18px; height: 20px; }
.fx sub { font-size: 13px; font-style: normal; vertical-align: -3px; line-height: 0; }
.view { position: relative; background: linear-gradient(#dcdcdc, #cacacd 40%, #a9a8b1); }
.scene { display: block; }
.vbar { position: absolute; left: 493px; top: 0; height: 26px; display: grid; grid-template-columns: 16px 28px 28px 26px 24px 24px 26px 25px 26px 26px 24px 27px 23px 24px 25px 26px 28px 26px 30px 26px 22px 28px 26px; background: #f1f1f1; border: 1px solid #696969; border-top: 0; }
.vbar > div { display: flex; align-items: center; justify-content: center; }
.vbar svg { width: 17px; height: 17px; }
.vbar .dn { width: 9px; height: 5px; }
.vbar .grip { align-items: flex-start; padding-top: 4px; border-right: 1px solid #696969; background: #e3e3e3; }
.vbar .grip svg { width: 12px; height: 6px; }
.vbar .end, .vbar .end2 { border-right: 1px solid #696969; }
.vbar .on { background: #4a4a4a; }
.vbar .on .dn { color: #fff; }
.axis { font: 12px "DejaVu Serif", serif; }

.task { display: grid; grid-template-columns: 48px 48px 54px 45px 50px 1024px 24px 25px 24px 25px 24px 24px 24px 32px 78px 46px 5px; background: linear-gradient(90deg, #2b4553 0, #2b4453 28.500%, #364c52 33%, #32474f 50%, #2f4148 65%, #263b48 70%, #263640 73%, #2c2f30 76%, #2d2f30 79%, #243840 82%, #1f3541 87%, #1d3542); color: #fff; font-family: "Open Sans", sans-serif; letter-spacing: 0; }
.task > div { display: flex; align-items: center; justify-content: center; }
.task .run { border-bottom: 2px solid #fcd9ae; margin: 0 3px 0 2px; padding-top: 2px; }
.task .cur { background: #5b707b; border-bottom: 2px solid #fcd9ae; margin: 0 0 0 2px; padding-top: 2px; }
.task .clock { line-height: 18px; text-align: center; }
.task .note { padding-right: 10px; }
.task .peek { border-left: 1px solid #7c8a91; }
```
